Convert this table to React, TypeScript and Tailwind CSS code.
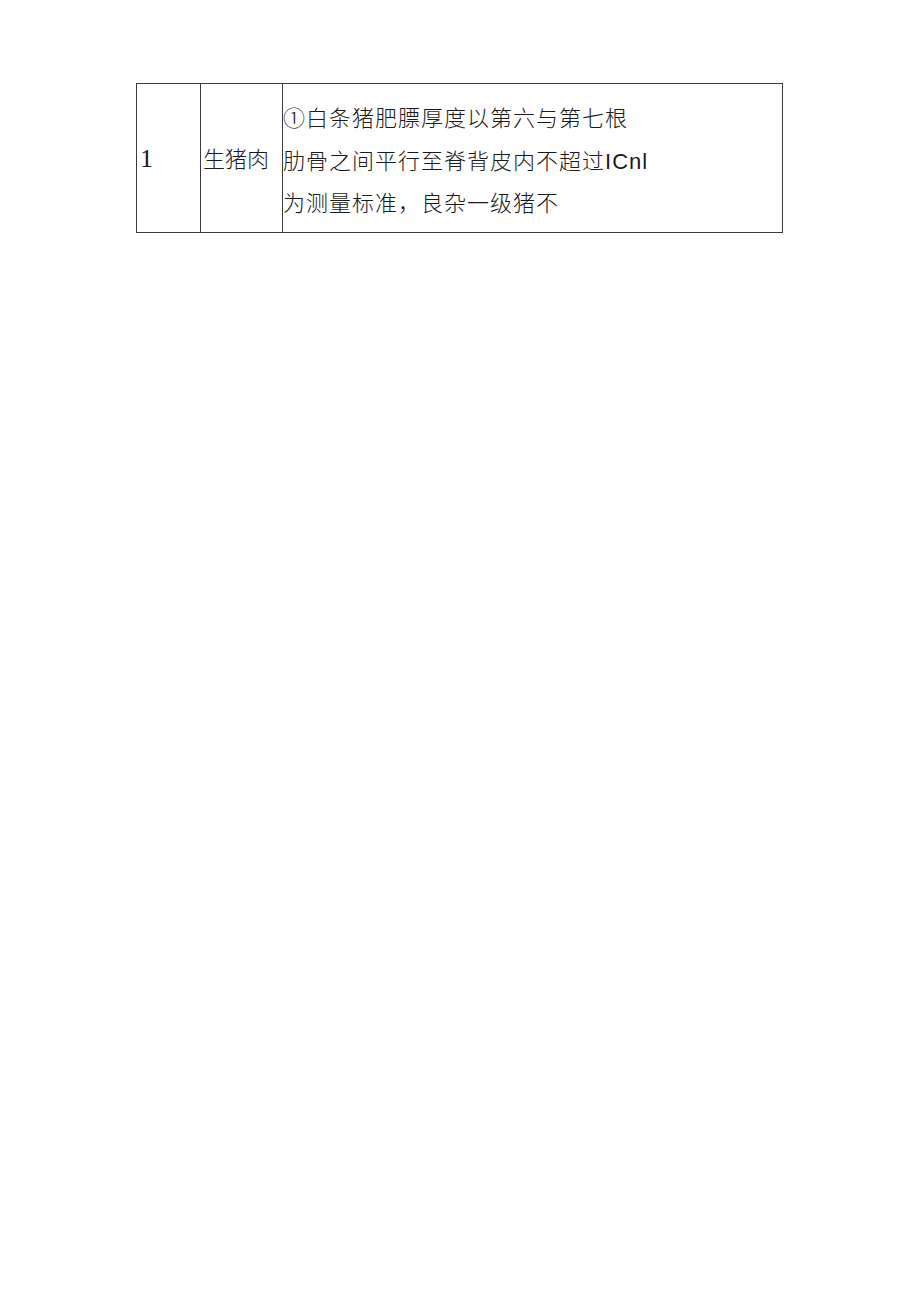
export default function App() {
  return (
    <div className="min-h-[1301px] w-[920px] bg-white">
      <div className="pl-[136px] pt-[83px]">
        <div className="flex w-[647px] border border-[#3a3a3a] text-[#1a1a1a]">
          <div
            className="flex w-[63px] items-center pl-[3px] pt-[2px] text-[26px]"
            style={{ fontFamily: '"Liberation Serif", serif' }}
          >
            1
          </div>
          <div
            className="flex w-[82px] items-center border-l border-[#3a3a3a] pl-[2px] text-[22px] font-light"
            style={{ fontFamily: '"Noto Sans CJK SC", sans-serif' }}
          >
            生猪肉
          </div>
          <div
            className="flex-1 border-l border-[#3a3a3a] pt-[14px] pb-[6px] text-[22px] font-light leading-[42.5px] tracking-[1px]"
            style={{ fontFamily: '"Liberation Sans", "Noto Sans CJK SC", sans-serif' }}
          >
            <p>①白条猪肥膘厚度以第六与第七根</p>
            <p>
              肋骨之间平行至脊背皮内不超过<span className="font-normal">ICnl</span>
            </p>
            <p>为测量标准，良杂一级猪不</p>
          </div>
        </div>
      </div>
    </div>
  );
}
